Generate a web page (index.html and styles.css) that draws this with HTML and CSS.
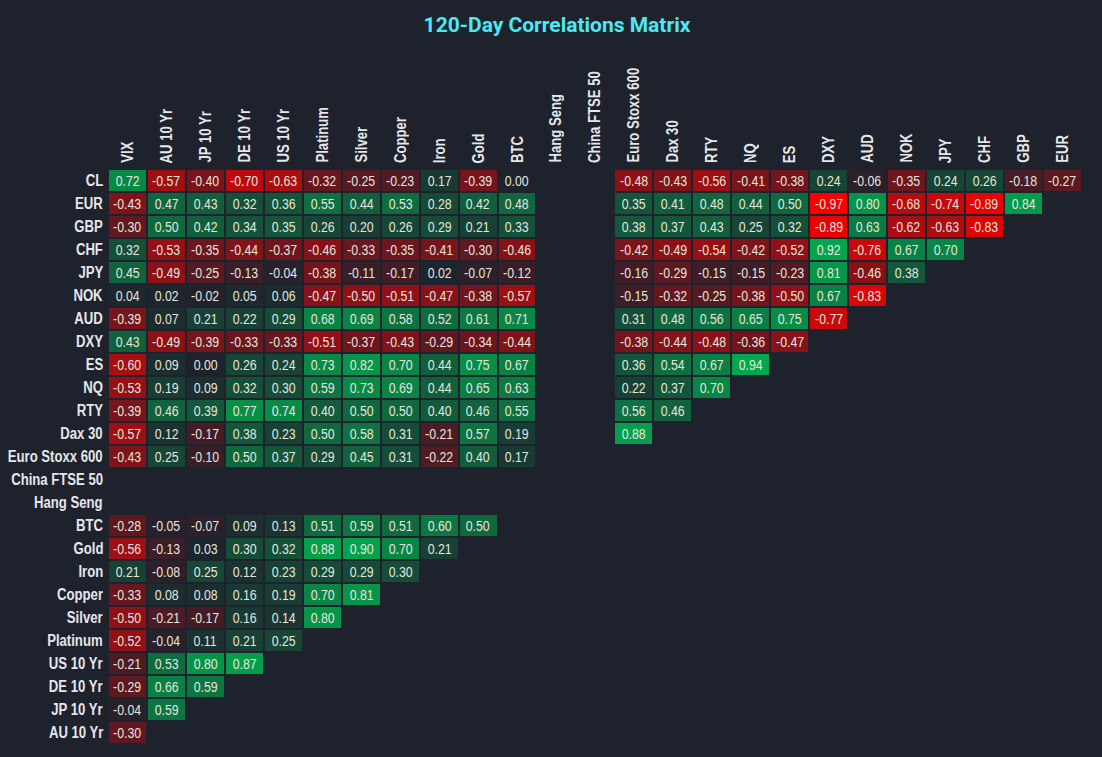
FILE: index.html
```html
<!DOCTYPE html>
<html lang="en">
<head>
<meta charset="utf-8">
<title>120-Day Correlations Matrix</title>
<link rel="stylesheet" href="styles.css">
</head>
<body>
<div class="page">
  <h1 class="title">120-Day Correlations Matrix</h1>
  <div class="matrix" id="matrix"></div>
</div>
<script src="script.js"></script>
</body>
</html>
```

FILE: styles.css
```css
html, body {
  margin: 0;
  padding: 0;
  background: #1e222d;
}
.page {
  width: 1102px;
  height: 757px;
  background: #1e222d;
  overflow: hidden;
}
.title {
  margin: 0;
  height: 60px;
  box-sizing: border-box;
  padding-top: 13px;
  padding-left: 12px;
  line-height: 24px;
  text-align: center;
  font-family: Roboto, "Liberation Sans", sans-serif;
  font-weight: 700;
  font-size: 21px;
  color: #4ae9f3;
}
.matrix {
  display: grid;
  grid-template-columns: 107px repeat(25, 36.96px);
  grid-template-rows: 108px repeat(25, 21px);
  column-gap: 2px;
  row-gap: 2px;
}
.col-label {
  display: flex;
  align-items: flex-end;
  justify-content: center;
  padding-bottom: 5px;
  padding-left: 1px;
  font-family: "Liberation Sans", Arial, sans-serif;
  font-weight: 700;
  font-size: 16px;
  color: #e6e7ea;
}
.col-label .vtext {
  writing-mode: vertical-rl;
  transform: rotate(180deg);
  white-space: nowrap;
  line-height: 18px;
}
.col-label .squeeze {
  display: inline-block;
  transform-origin: 50% 0;
  transform: scaleY(0.82);
}
.row-label {
  display: flex;
  align-items: center;
  justify-content: flex-end;
  padding-right: 4px;
  font-family: "Liberation Sans", Arial, sans-serif;
  font-weight: 700;
  font-size: 16px;
  color: #e6e7ea;
  white-space: nowrap;
}
.row-label .squeeze {
  display: inline-block;
  flex: none;
  transform-origin: 100% 50%;
  transform: scaleX(0.82);
}
.cell {
  display: flex;
  align-items: center;
  justify-content: center;
  font-family: "Liberation Sans", Arial, sans-serif;
  font-size: 15px;
  color: #e6e5de;
  white-space: nowrap;
}
.cell .squeeze {
  display: inline-block;
  flex: none;
  transform: scaleX(0.82);
}
.cell.empty {
  background: transparent;
}
```

FILE: script.js
```js
(function () {
  var cols = ["VIX", "AU 10 Yr", "JP 10 Yr", "DE 10 Yr", "US 10 Yr", "Platinum", "Silver", "Copper", "Iron", "Gold", "BTC", "Hang Seng", "China FTSE 50", "Euro Stoxx 600", "Dax 30", "RTY", "NQ", "ES", "DXY", "AUD", "NOK", "JPY", "CHF", "GBP", "EUR"];
  var N = null;
  var rows = [
    ["CL", [0.72, -0.57, -0.40, -0.70, -0.63, -0.32, -0.25, -0.23, 0.17, -0.39, 0.00, N, N, -0.48, -0.43, -0.56, -0.41, -0.38, 0.24, -0.06, -0.35, 0.24, 0.26, -0.18, -0.27]],
    ["EUR", [-0.43, 0.47, 0.43, 0.32, 0.36, 0.55, 0.44, 0.53, 0.28, 0.42, 0.48, N, N, 0.35, 0.41, 0.48, 0.44, 0.50, -0.97, 0.80, -0.68, -0.74, -0.89, 0.84]],
    ["GBP", [-0.30, 0.50, 0.42, 0.34, 0.35, 0.26, 0.20, 0.26, 0.29, 0.21, 0.33, N, N, 0.38, 0.37, 0.43, 0.25, 0.32, -0.89, 0.63, -0.62, -0.63, -0.83]],
    ["CHF", [0.32, -0.53, -0.35, -0.44, -0.37, -0.46, -0.33, -0.35, -0.41, -0.30, -0.46, N, N, -0.42, -0.49, -0.54, -0.42, -0.52, 0.92, -0.76, 0.67, 0.70]],
    ["JPY", [0.45, -0.49, -0.25, -0.13, -0.04, -0.38, -0.11, -0.17, 0.02, -0.07, -0.12, N, N, -0.16, -0.29, -0.15, -0.15, -0.23, 0.81, -0.46, 0.38]],
    ["NOK", [0.04, 0.02, -0.02, 0.05, 0.06, -0.47, -0.50, -0.51, -0.47, -0.38, -0.57, N, N, -0.15, -0.32, -0.25, -0.38, -0.50, 0.67, -0.83]],
    ["AUD", [-0.39, 0.07, 0.21, 0.22, 0.29, 0.68, 0.69, 0.58, 0.52, 0.61, 0.71, N, N, 0.31, 0.48, 0.56, 0.65, 0.75, -0.77]],
    ["DXY", [0.43, -0.49, -0.39, -0.33, -0.33, -0.51, -0.37, -0.43, -0.29, -0.34, -0.44, N, N, -0.38, -0.44, -0.48, -0.36, -0.47]],
    ["ES", [-0.60, 0.09, 0.00, 0.26, 0.24, 0.73, 0.82, 0.70, 0.44, 0.75, 0.67, N, N, 0.36, 0.54, 0.67, 0.94]],
    ["NQ", [-0.53, 0.19, 0.09, 0.32, 0.30, 0.59, 0.73, 0.69, 0.44, 0.65, 0.63, N, N, 0.22, 0.37, 0.70]],
    ["RTY", [-0.39, 0.46, 0.39, 0.77, 0.74, 0.40, 0.50, 0.50, 0.40, 0.46, 0.55, N, N, 0.56, 0.46]],
    ["Dax 30", [-0.57, 0.12, -0.17, 0.38, 0.23, 0.50, 0.58, 0.31, -0.21, 0.57, 0.19, N, N, 0.88]],
    ["Euro Stoxx 600", [-0.43, 0.25, -0.10, 0.50, 0.37, 0.29, 0.45, 0.31, -0.22, 0.40, 0.17]],
    ["China FTSE 50", []],
    ["Hang Seng", []],
    ["BTC", [-0.28, -0.05, -0.07, 0.09, 0.13, 0.51, 0.59, 0.51, 0.60, 0.50]],
    ["Gold", [-0.56, -0.13, 0.03, 0.30, 0.32, 0.88, 0.90, 0.70, 0.21]],
    ["Iron", [0.21, -0.08, 0.25, 0.12, 0.23, 0.29, 0.29, 0.30]],
    ["Copper", [-0.33, 0.08, 0.08, 0.16, 0.19, 0.70, 0.81]],
    ["Silver", [-0.50, -0.21, -0.17, 0.16, 0.14, 0.80]],
    ["Platinum", [-0.52, -0.04, 0.11, 0.21, 0.25]],
    ["US 10 Yr", [-0.21, 0.53, 0.80, 0.87]],
    ["DE 10 Yr", [-0.29, 0.66, 0.59]],
    ["JP 10 Yr", [-0.04, 0.59]],
    ["AU 10 Yr", [-0.30]]
  ];

  var bg = [30, 34, 45];
  var red = [255, 0, 0];
  var green = [0, 176, 80];

  function colorFor(v) {
    var t = Math.min(1, Math.abs(v));
    var end = v < 0 ? red : green;
    var c = [];
    for (var i = 0; i < 3; i++) {
      c.push(Math.round(bg[i] + (end[i] - bg[i]) * t));
    }
    return "rgb(" + c.join(",") + ")";
  }

  function squeeze(text) {
    var s = document.createElement("span");
    s.className = "squeeze";
    s.textContent = text;
    return s;
  }

  var m = document.getElementById("matrix");

  var corner = document.createElement("div");
  corner.className = "corner";
  m.appendChild(corner);

  cols.forEach(function (name) {
    var d = document.createElement("div");
    d.className = "col-label";
    var v = document.createElement("span");
    v.className = "vtext";
    v.appendChild(squeeze(name));
    d.appendChild(v);
    m.appendChild(d);
  });

  rows.forEach(function (r) {
    var lab = document.createElement("div");
    lab.className = "row-label";
    lab.appendChild(squeeze(r[0]));
    m.appendChild(lab);
    for (var i = 0; i < cols.length; i++) {
      var v = r[1][i];
      var c = document.createElement("div");
      if (v === null || v === undefined) {
        c.className = "cell empty";
      } else {
        c.className = "cell";
        c.style.background = colorFor(v);
        c.appendChild(squeeze(v.toFixed(2)));
      }
      m.appendChild(c);
    }
  });
})();
```
